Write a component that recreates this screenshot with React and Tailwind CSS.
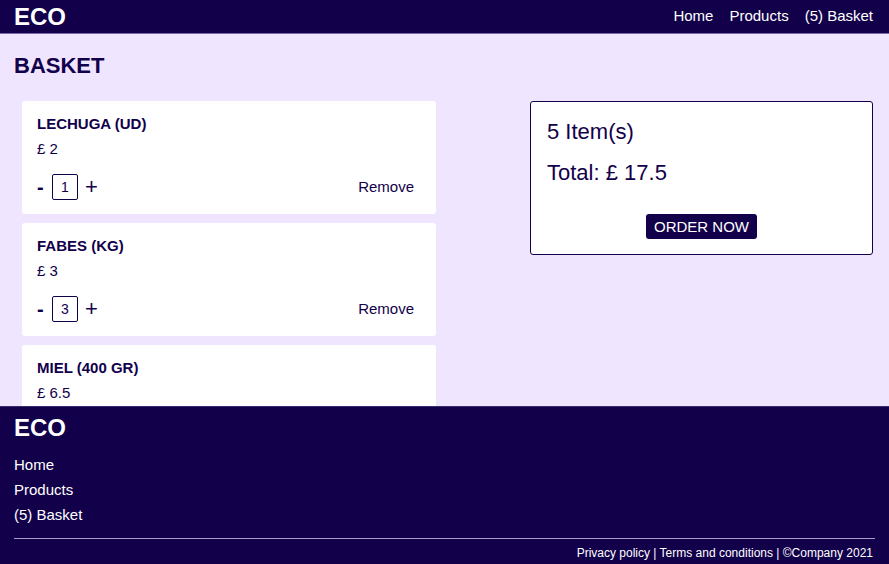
import React from 'react';

const items = [
  { name: 'LECHUGA (UD)', price: 2, qty: 1 },
  { name: 'FABES (KG)', price: 3, qty: 3 },
  { name: 'MIEL (400 GR)', price: 6.5, qty: 1 },
];

const links = ['Home', 'Products', '(5) Basket'];

function BasketItem({ item }) {
  return (
    <div className="bg-white rounded-[3px] w-[414px] shrink-0 px-[15px] pt-[13px] pb-[14px]">
      <div className="text-[15px] leading-[20px] font-bold">{item.name}</div>
      <div className="text-[15px] leading-[20px] mt-[5px]">£ {item.price}</div>
      <div className="flex items-center mt-[15px] h-[26px]">
        <span className="text-[20px] leading-none w-[15px] font-bold">-</span>
        <span className="w-[26px] h-[26px] border-[1.5px] border-[#12004a] rounded-[2px] flex items-center justify-center text-[14px]">
          {item.qty}
        </span>
        <span className="text-[22px] leading-none ml-[7px]">+</span>
        <span className="ml-auto mr-[7px] text-[15px]">Remove</span>
      </div>
    </div>
  );
}

export default function App() {
  return (
    <div
      className="h-[564px] flex flex-col overflow-hidden bg-[#efe5ff] text-[#12004a]"
      style={{ fontFamily: '"Liberation Sans", Arial, sans-serif' }}
    >
      <header className="h-[34px] shrink-0 bg-[#12004a] border-b border-[#7a68a8] flex items-center justify-between px-[14px] text-white">
        <div className="text-[24px] font-bold leading-none">ECO</div>
        <nav className="flex gap-[16px] text-[15px] mr-[2px]">
          {links.map((l) => (
            <span key={l}>{l}</span>
          ))}
        </nav>
      </header>

      <main className="flex-1 min-h-0 overflow-hidden px-[14px] pt-[19px]">
        <h1 className="text-[22px] leading-[26px] font-bold">BASKET</h1>
        <div className="flex mt-[22px]">
          <div className="flex flex-col gap-[9px] pl-[8px] w-[516px]">
            {items.map((it) => (
              <BasketItem key={it.name} item={it} />
            ))}
          </div>
          <div className="w-[343px] h-[154px] bg-white border-[1.5px] border-[#12004a] rounded-[3px] px-[16px] pt-[16px] flex flex-col">
            <div className="text-[22px] leading-[28px]">5 Item(s)</div>
            <div className="text-[22px] leading-[28px] mt-[13px]">Total: £ 17.5</div>
            <div className="flex justify-center mt-[27px]">
              <button className="bg-[#12004a] text-white text-[15px] h-[25px] px-[8px] rounded-[3px] leading-none">
                ORDER NOW
              </button>
            </div>
          </div>
        </div>
      </main>

      <footer className="h-[158px] shrink-0 bg-[#12004a] border-t border-[#3a2a70] text-white px-[14px] pt-[8px]">
        <div className="text-[24px] font-bold leading-[26px]">ECO</div>
        <div className="flex flex-col mt-[11px] text-[15px]">
          {links.map((l) => (
            <span key={l} className="leading-[25px]">{l}</span>
          ))}
        </div>
        <div className="border-t border-[#a99cc8] mt-[11px]" />
        <div className="text-right text-[12px] leading-[14px] mt-[7px] mr-[2px]">
          Privacy policy | Terms and conditions | ©Company 2021
        </div>
      </footer>
    </div>
  );
}
